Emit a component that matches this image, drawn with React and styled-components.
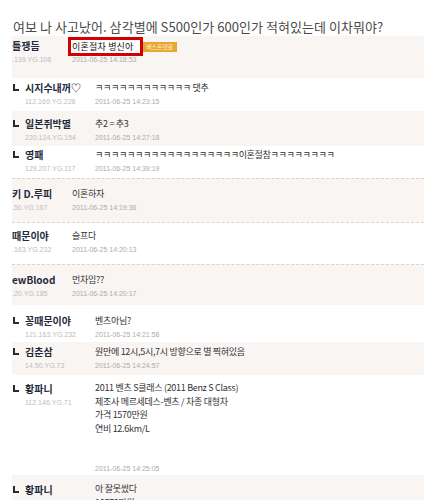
import React from "react";
import styled, { createGlobalStyle } from "styled-components";

const GlobalStyle = createGlobalStyle`
  html, body {
    margin: 0;
    padding: 0;
    background: #fff;
  }
  body {
    font-family: "Noto Sans CJK KR", "Noto Sans", sans-serif;
  }
`;

const Page = styled.div`
  width: 424px;
  height: 500px;
  overflow: hidden;
  background: #fff;
`;

const Headline = styled.h1`
  margin: 19px 0 1px 13px;
  font-size: 13px;
  line-height: 16px;
  font-weight: 400;
  letter-spacing: 0.05px;
  color: #4a4a4a;
  white-space: nowrap;
`;

const Thread = styled.div`
  margin-left: 12px;
`;

const Row = styled.div`
  display: flex;
  align-items: flex-start;
  padding: ${(p) => p.$pt}px 0 ${(p) => p.$pb}px;
  background: ${(p) => (p.$shade ? "#f9f5f3" : "#fff")};
  border-top: ${(p) => (p.$divider ? "1px dashed #ddd2ce" : "0")};
`;

const Indent = styled.div`
  width: 13px;
  flex: none;
  box-sizing: border-box;
  padding: 4px 0 0 1px;
`;

const ReplyMark = styled.span`
  display: block;
  width: 4px;
  height: 5px;
  border-left: 2px solid #2a2a2a;
  border-bottom: 2px solid #2a2a2a;
`;

const Author = styled.div`
  width: ${(p) => (p.$reply ? 70 : 60)}px;
  flex: none;
`;

const Nick = styled.div`
  font-size: 10px;
  line-height: 15px;
  font-weight: 700;
  color: #1f2a3c;
  white-space: nowrap;
`;

const Meta = styled.div`
  font-family: "Liberation Sans", Arial, sans-serif;
  font-size: 7px;
  line-height: 13px;
  color: ${(p) => (p.$light ? "#bdbdbd" : "#ababab")};
  margin-top: ${(p) => p.$gap || 0}px;
  white-space: nowrap;
`;

const Body = styled.div`
  flex: 1;
  min-width: 0;
`;

const Line = styled.div`
  font-size: 9px;
  line-height: ${(p) => p.$lh || 15}px;
  letter-spacing: -0.3px;
  color: #333;
  white-space: nowrap;
`;

const Marked = styled.span`
  position: relative;
  z-index: 1;
  display: inline-block;
  vertical-align: middle;
  line-height: 13px;
  letter-spacing: 0.2px;
  padding: 0 6px 0 1px;
  margin-left: -1px;
  background: #fff;
  color: #111;
  box-shadow: 0 0 0 3px #d30000;
`;

const Badge = styled.span`
  display: inline-block;
  vertical-align: middle;
  width: 34px;
  height: 10px;
  margin-left: 3px;
  background: #e8a534;
  color: #fff1cc;
  font-size: 6px;
  line-height: 10px;
  text-align: center;
  letter-spacing: -0.2px;
`;

const rows = [
  {
    nick: "틀쟁듬",
    ip: ".139.YG.106",
    date: "2011-06-25 14:18:53",
    best: "이혼절차 병신아",
    shade: true,
    pt: 2,
    pb: 12,
  },
  {
    reply: true,
    nick: "시지수내꺼♡",
    ip: "112.169.YG.228",
    date: "2011-06-25 14:23:15",
    lines: ["ㅋㅋㅋㅋㅋㅋㅋㅋㅋㅋㅋㅋ 댓추"],
    pt: 2,
    pb: 3,
  },
  {
    reply: true,
    nick: "일본쥐박멸",
    ip: "220.124.YG.154",
    date: "2011-06-25 14:27:18",
    lines: ["추2 = 추3"],
    shade: true,
    pt: 5,
    pb: 2,
  },
  {
    reply: true,
    nick: "영패",
    ip: "129.207.YG.117",
    date: "2011-06-25 14:39:19",
    lines: ["ㅋㅋㅋㅋㅋㅋㅋㅋㅋㅋㅋㅋㅋㅋㅋㅋㅋㅋ이혼절참ㅋㅋㅋㅋㅋㅋㅋㅋ"],
    pt: 1,
    pb: 3,
  },
  {
    nick: "키 D.루피",
    ip: ".50.YG.167",
    date: "2011-06-25 14:19:36",
    lines: ["이혼하자"],
    shade: true,
    divider: true,
    pt: 7,
    pb: 8,
  },
  {
    nick: "때문이야",
    ip: ".163.YG.232",
    date: "2011-06-25 14:20:13",
    lines: ["슬프다"],
    divider: true,
    pt: 5,
    pb: 8,
  },
  {
    nick: "ewBlood",
    ip: ".20.YG.185",
    date: "2011-06-25 14:20:17",
    lines: ["먼차임??"],
    shade: true,
    divider: true,
    pt: 7,
    pb: 5,
  },
  {
    reply: true,
    nick: "꽁때문이야",
    ip: "121.163.YG.232",
    date: "2011-06-25 14:21:58",
    lines: ["벤츠아님?"],
    pt: 8,
    pb: 1,
  },
  {
    reply: true,
    nick: "김춘삼",
    ip: "14.50.YG.73",
    date: "2011-06-25 14:24:57",
    lines: ["원만에 12시,5시,7시 방향으로 별 찍혀있음"],
    shade: true,
    pt: 2,
    pb: 3,
  },
  {
    reply: true,
    nick: "황파니",
    ip: "112.146.YG.71",
    date: "2011-06-25 14:25:05",
    lines: [
      "2011 벤츠 S클래스 (2011 Benz S Class)",
      "제조사 메르세데스-벤츠 / 차종 대형차",
      "가격 1570만원",
      "연비 12.6km/L",
    ],
    lh: 13.5,
    dateGap: 27,
    pt: 6,
    pb: 0,
  },
  {
    reply: true,
    nick: "황파니",
    ip: "112.146.YG.71",
    date: "2011-06-25 14:26:11",
    lines: ["아 잘못썼다", "10570만원"],
    lh: 13.5,
    shade: true,
    pt: 7,
    pb: 6,
  },
];

const Comment = ({ row }) => (
  <Row $shade={row.shade} $divider={row.divider} $pt={row.pt} $pb={row.pb}>
    {row.reply && (
      <Indent>
        <ReplyMark />
      </Indent>
    )}
    <Author $reply={row.reply}>
      <Nick>{row.nick}</Nick>
      <Meta $light>{row.ip}</Meta>
    </Author>
    <Body>
      {row.best ? (
        <Line>
          <Marked>{row.best}</Marked>
          <Badge>베스트댓글</Badge>
        </Line>
      ) : (
        row.lines.map((text, i) => (
          <Line key={i} $lh={row.lh}>
            {text}
          </Line>
        ))
      )}
      <Meta $gap={row.dateGap}>{row.date}</Meta>
    </Body>
  </Row>
);

export default function App() {
  return (
    <Page>
      <GlobalStyle />
      <Headline>
        여보 나 사고났어. 삼각별에 S500인가 600인가 적혀있는데 이차뭐야?
      </Headline>
      <Thread>
        {rows.map((row, i) => (
          <Comment key={i} row={row} />
        ))}
      </Thread>
    </Page>
  );
}
